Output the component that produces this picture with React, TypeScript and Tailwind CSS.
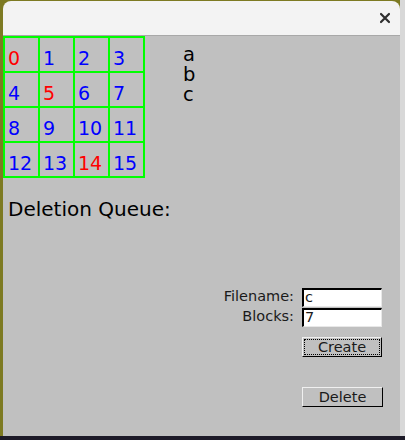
import React from "react";

const cells = [
  { n: "0", red: true }, { n: "1" }, { n: "2" }, { n: "3" },
  { n: "4" }, { n: "5", red: true }, { n: "6" }, { n: "7" },
  { n: "8" }, { n: "9" }, { n: "10" }, { n: "11" },
  { n: "12" }, { n: "13" }, { n: "14", red: true }, { n: "15" },
];

export default function App() {
  return (
    <div
      className="w-[405px] h-[440px] overflow-hidden bg-[#7d7a22] relative"
      style={{ fontFamily: '"DejaVu Sans", sans-serif' }}
    >
      <div className="absolute right-0 top-0 w-[5px] h-[440px] bg-[#d8d8d8]" />
      <div className="absolute left-0 bottom-0 w-[405px] h-[4px] bg-[#1d1a28]" />
      <div className="relative ml-[3px] mt-[1px] w-[397px] h-[435px] flex flex-col rounded-t-[8px] overflow-hidden">
        <div className="h-[35px] bg-[#f3f3f3] flex items-center justify-end pr-[9px] border-b border-[#a8a8a8]">
          <svg width="12" height="12" viewBox="0 0 12 12">
            <path d="M2 2 L10 10 M10 2 L2 10" stroke="#2e2e2e" strokeWidth="2.2" strokeLinecap="round" />
          </svg>
        </div>
        <div className="flex-1 bg-[#c0c0c0] flex flex-col">
          <div className="flex">
            <div className="grid grid-cols-[repeat(4,33px)] auto-rows-[33px] gap-[2px] p-[2px] bg-[#00ff00] self-start">
              {cells.map((c) => (
                <div
                  key={c.n}
                  className={`bg-[#c0c0c0] flex items-end pl-[3px] pb-[3px] text-[19px] leading-none ${
                    c.red ? "text-[#ff0000]" : "text-[#0000ff]"
                  }`}
                >
                  {c.n}
                </div>
              ))}
            </div>
            <div className="ml-[38px] mt-[9px] flex flex-col text-[19.5px] leading-[20px] text-black">
              <span>a</span>
              <span>b</span>
              <span>c</span>
            </div>
          </div>
          <div className="ml-[5px] mt-[20px] text-[20px] leading-[22px] text-black">Deletion Queue:</div>
          <div className="mt-[67px] flex flex-col items-end pr-[18px] text-[14.5px] text-[#1a1a1a]">
            <div className="flex items-center gap-[8px] h-[20px]">
              <span>Filename:</span>
              <div className="w-[80px] h-[19px] bg-white border-t-2 border-l-2 border-b border-r border-t-black border-l-black border-b-[#e8e8e8] border-r-[#e8e8e8] flex items-center pl-[1px] leading-none">
                c
              </div>
            </div>
            <div className="flex items-center gap-[8px] h-[20px]">
              <span>Blocks:</span>
              <div className="w-[80px] h-[19px] bg-white border-t-2 border-l-2 border-b border-r border-t-black border-l-black border-b-[#e8e8e8] border-r-[#e8e8e8] flex items-center pl-[1px] leading-none">
                7
              </div>
            </div>
            <div className="mt-[10px] w-[80px] h-[20px] border border-t-[#f0f0f0] border-l-[#f0f0f0] border-b-black border-r-black p-[1px]">
              <div className="w-full h-full border border-dotted border-black flex items-center justify-center leading-none text-[14.5px]">
                Create
              </div>
            </div>
            <div className="mt-[30px] -mr-[1px] w-[81px] h-[20px] border border-t-[#f0f0f0] border-l-[#f0f0f0] border-b-black border-r-black flex items-center justify-center leading-none text-[14.5px]">
              Delete
            </div>
          </div>
        </div>
      </div>
    </div>
  );
}
